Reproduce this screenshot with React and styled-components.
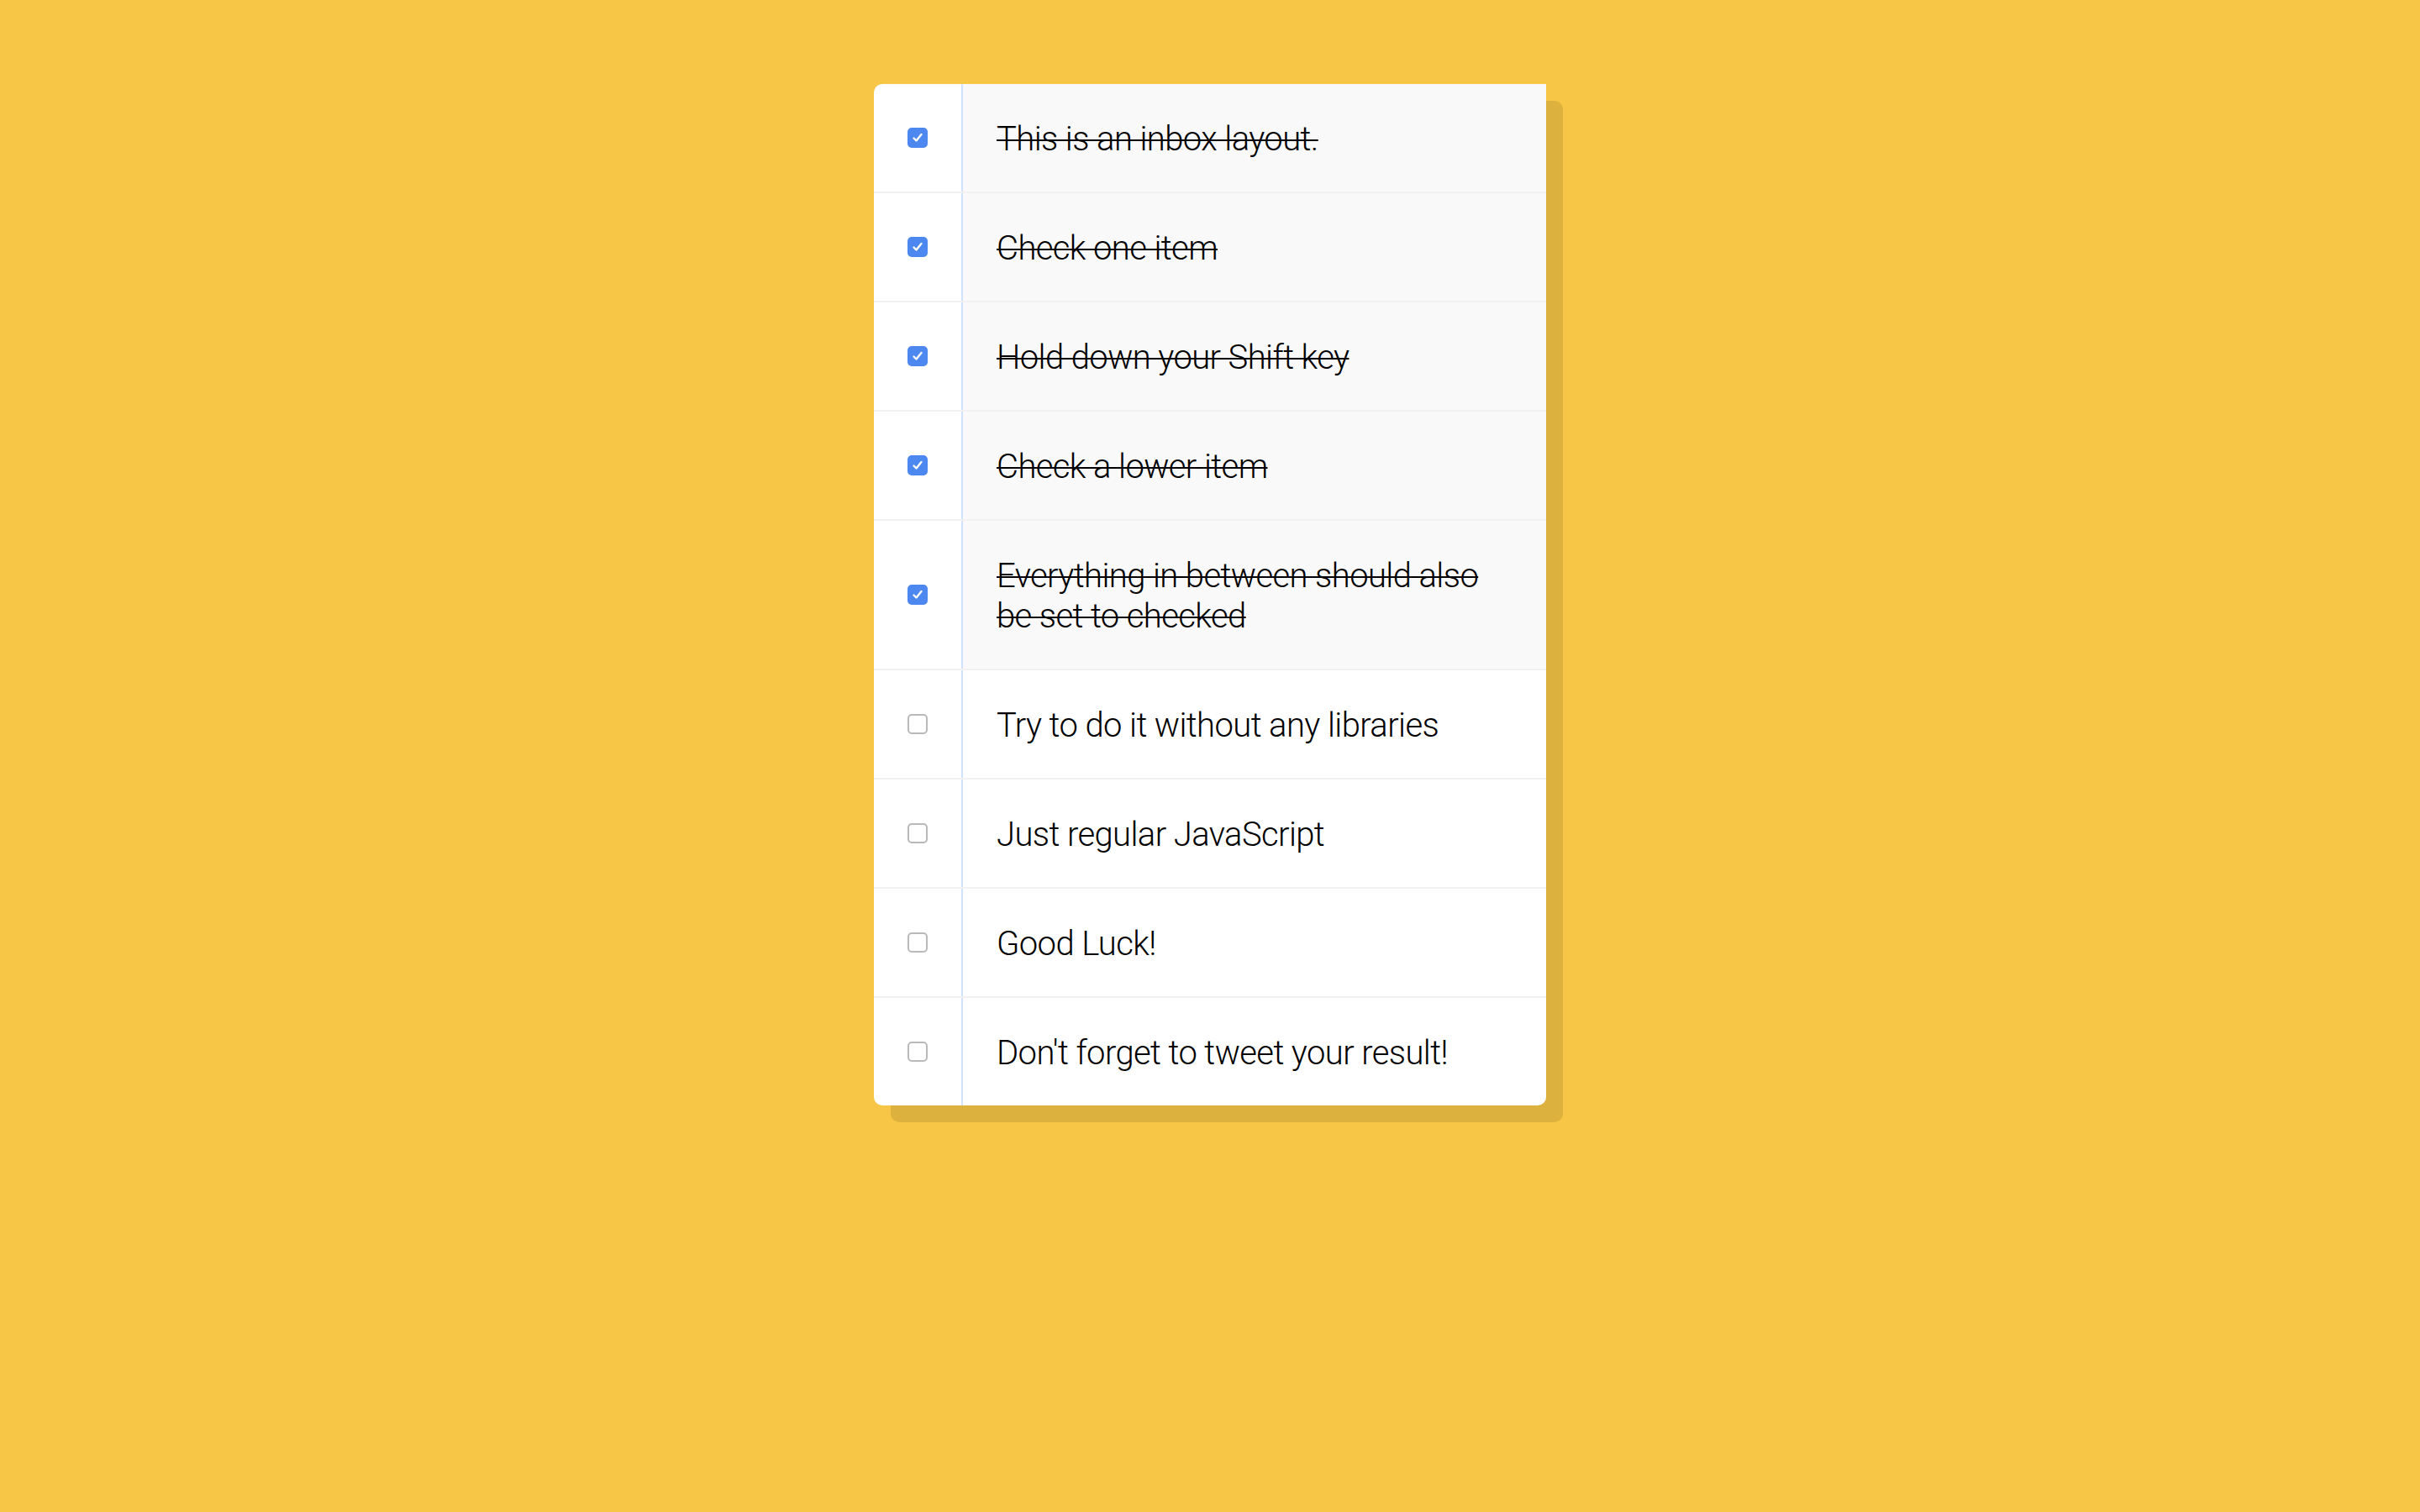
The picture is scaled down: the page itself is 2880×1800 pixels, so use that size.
import styled, { createGlobalStyle } from 'styled-components'

const GlobalStyle = createGlobalStyle`
  html, body {
    margin: 0;
    padding: 0;
    background: #f7c646;
  }
  body {
    font-family: Roboto, "Liberation Sans", sans-serif;
  }
`

const Page = styled.div`
  min-height: 1800px;
  padding-top: 100px;
  box-sizing: border-box;
`

const Inbox = styled.div`
  width: 800px;
  margin: 0 auto;
  background: #fff;
  border-radius: 10px;
  box-shadow: 20px 20px 0 rgba(0, 0, 0, 0.1);
`

const Item = styled.label`
  display: flex;
  align-items: center;
  border-bottom: 2px solid #f1f1f1;
  cursor: pointer;
  &:last-child { border-bottom: 0; }
`

const Box = styled.span`
  width: 24px;
  height: 24px;
  margin: 40px;
  flex-shrink: 0;
  box-sizing: border-box;
  border-radius: 5px;
  display: flex;
  align-items: center;
  justify-content: center;
  background: ${props => props.$checked ? '#4d87f0' : '#fff'};
  border: ${props => props.$checked ? 'none' : '2px solid #b9b9b9'};
`

const Text = styled.p`
  margin: 0;
  padding: 42px 40px 38px;
  flex: 1;
  font-family: Roboto, "Liberation Sans", sans-serif;
  font-size: 40px;
  font-weight: 300;
  line-height: 48px;
  letter-spacing: -0.6px;
  color: #000;
  border-left: 2px solid #d1e2ff;
  background: ${props => props.$checked ? '#f9f9f9' : 'transparent'};
  text-decoration: ${props => props.$checked ? 'line-through' : 'none'};
  text-decoration-thickness: 2px;
`

const items = [
  { text: 'This is an inbox layout.', done: true },
  { text: 'Check one item', done: true },
  { text: 'Hold down your Shift key', done: true },
  { text: 'Check a lower item', done: true },
  { text: 'Everything in between should also be set to checked', done: true },
  { text: 'Try to do it without any libraries', done: false },
  { text: 'Just regular JavaScript', done: false },
  { text: 'Good Luck!', done: false },
  { text: "Don't forget to tweet your result!", done: false },
]

function CheckMark() {
  return (
    <svg width="16" height="16" viewBox="0 0 16 16">
      <path d="M3.5 8.5 L6.5 11.5 L12.5 4" fill="none" stroke="#fff" strokeWidth="2.4" strokeLinecap="round" strokeLinejoin="round" />
    </svg>
  )
}

export default function App() {
  return (
    <Page>
      <GlobalStyle />
      <Inbox>
        {items.map(item => (
          <Item key={item.text}>
            <Box $checked={item.done}>{item.done && <CheckMark />}</Box>
            <Text $checked={item.done}>{item.text}</Text>
          </Item>
        ))}
      </Inbox>
    </Page>
  )
}
